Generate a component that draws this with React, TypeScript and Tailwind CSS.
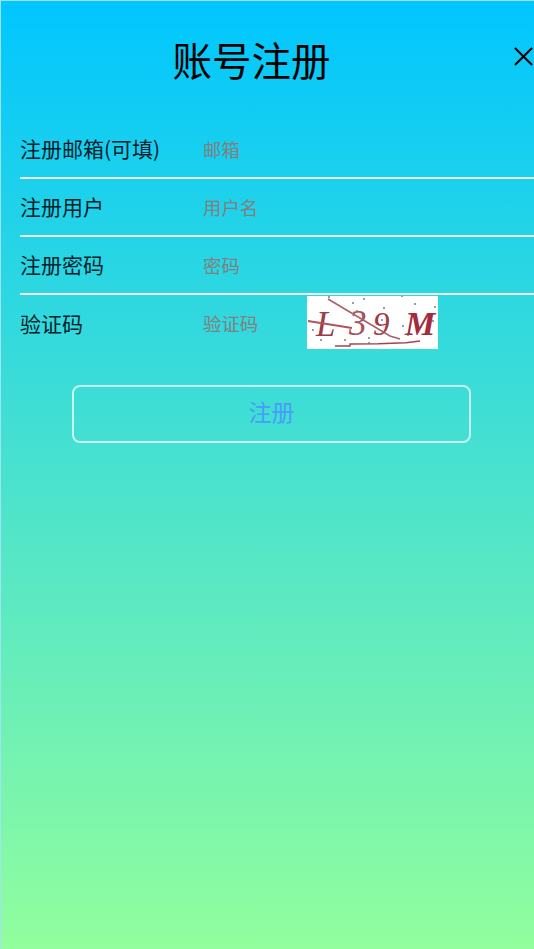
import React from 'react';

const fields = [
  { label: '注册邮箱(可填)', placeholder: '邮箱' },
  { label: '注册用户', placeholder: '用户名' },
  { label: '注册密码', placeholder: '密码' },
];

const Captcha = () => (
  <svg viewBox="0 0 131 53" className="block w-[131px] h-[53px] bg-white shrink-0">
    <text x="9" y="40" fontFamily="'Liberation Serif', serif" fontStyle="italic" fontSize="35" fill="#a03a48">L</text>
    <text x="42" y="39" fontFamily="'Liberation Serif', serif" fontStyle="italic" fontSize="35" fill="#a8505c">3</text>
    <text x="66" y="39" fontFamily="'Liberation Serif', serif" fontStyle="italic" fontSize="33" fill="#a03a48">9</text>
    <text x="98" y="39" fontFamily="'Liberation Serif', serif" fontStyle="italic" fontWeight="bold" fontSize="34" fill="#a32c3c">M</text>
    <path d="M1 25 L45 32" stroke="#b5505c" strokeWidth="1.8" fill="none" />
    <path d="M21 3 L83 40 L93 43" stroke="#a8606a" strokeWidth="1.6" fill="none" />
    <path d="M28 50 L43 50 L43 48 L71 47.7 L99 46.7 L113 45" stroke="#a8424f" strokeWidth="1.4" fill="none" />
    {[[6,34],[14,44],[22,1],[46,7],[57,3],[77,12],[95,0],[108,8],[128,11],[126,25],[62,42],[101,39],[75,24],[38,44],[50,15],[96,30],[62,47]].map(([cx, cy], i) => (
      <circle key={i} cx={cx} cy={cy} r="0.9" fill="#6a7078" />
    ))}
  </svg>
);

export default function App() {
  return (
    <div className="h-[949px] w-[534px] overflow-hidden border-t border-l border-t-[#9fe3f7] border-l-[#9fe3f7] bg-[linear-gradient(#00c6ff,#92fe9d)] font-['Microsoft_YaHei','Noto_Sans_CJK_SC',sans-serif]">
      <header className="flex h-[120px] items-center pb-[4px]">
        <h1 className="flex-1 pr-[11px] text-center text-[39.5px] font-normal leading-none text-black">账号注册</h1>
        <svg viewBox="0 0 22 22" className="mb-[5px] h-[21px] w-[21px] shrink-0 text-black">
          <path d="M2 2 L20 20 M20 2 L2 20" stroke="currentColor" strokeWidth="2.2" fill="none" />
        </svg>
      </header>

      <form className="pl-[19px]">
        {fields.map((f) => (
          <div key={f.label} className="flex h-[58px] items-center border-b-2 border-[#f0fbfb] text-[21px] text-[#04202a]">
            <label className="w-[183px] shrink-0 pb-[1px]">{f.label}</label>
            <input
              placeholder={f.placeholder}
              className="min-w-0 flex-1 bg-transparent pt-[2px] text-[18.4px] outline-none placeholder:text-[#808080]"
            />
          </div>
        ))}
        <div className="flex h-[56px] items-center text-[21px] text-[#04202a]">
          <label className="w-[183px] shrink-0 pt-[2px]">验证码</label>
          <input
            placeholder="验证码"
            className="w-[104px] bg-transparent pt-[2px] text-[18.4px] outline-none placeholder:text-[#808080]"
          />
          <div className="pb-[2px]"><Captcha /></div>
        </div>
      </form>

      <div className="flex justify-center pt-[34px] pl-[8px]">
        <button className="h-[58px] w-[399px] rounded-lg border-2 border-[#c8f6f2] pb-[6px] text-[23px] text-[#4a9cf5]">注册</button>
      </div>
    </div>
  );
}
